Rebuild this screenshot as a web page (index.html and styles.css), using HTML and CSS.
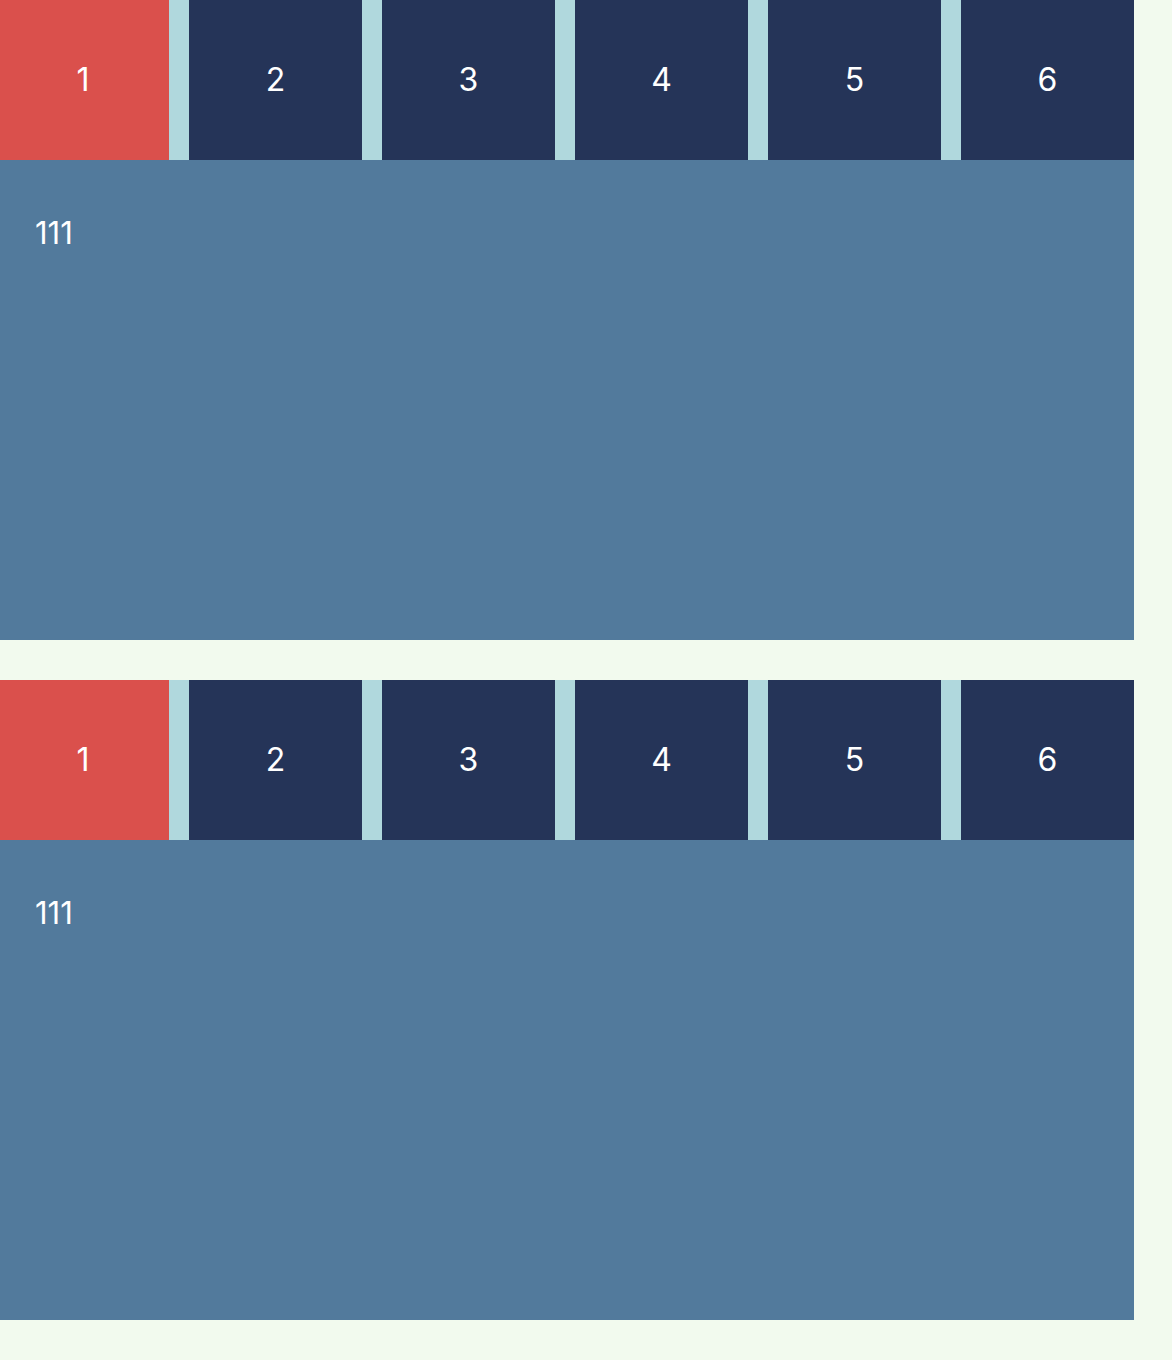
FILE: index.html
```html
<!DOCTYPE html>
<html lang="zh">
<head>
    <meta charset="UTF-8">
    <meta name="viewport" content="width=device-width, initial-scale=1.0">
    <title>选项卡</title>
    <link rel="stylesheet" href="styles.css">
</head>
<body>

<div class="tabs">
    <ul class="tab-list">
        <li class="active">1</li>
        <li>2</li>
        <li>3</li>
        <li>4</li>
        <li>5</li>
        <li>6</li>
    </ul>
    <div class="tab-content">
        <p>111</p>
    </div>
</div>

<div class="tabs">
    <ul class="tab-list">
        <li class="active">1</li>
        <li>2</li>
        <li>3</li>
        <li>4</li>
        <li>5</li>
        <li>6</li>
    </ul>
    <div class="tab-content">
        <p>111</p>
    </div>
</div>

</body>
</html>
```

FILE: styles.css
```css
body {
    margin: 0;
    background-color: #f2faee;
    font-family: Inter, "Liberation Sans", Arial, sans-serif;
    color: #fff;
}

.tabs {
    width: 1134px;
    margin-bottom: 40px;
}

.tab-list {
    display: flex;
    gap: 20px;
    margin: 0;
    padding: 0;
    list-style: none;
    background-color: #b0d8dd;
}

.tab-list li {
    width: 173px;
    height: 160px;
    line-height: 160px;
    text-align: center;
    font-size: 32px;
    background-color: #253458;
}

/* primera pestaña un poco recortada */
.tab-list li:first-child {
    width: 169px;
    padding-right: 3px;
    box-sizing: border-box;
}

.tab-list li.active {
    background-color: #da504c;
}

.tab-content {
    height: 480px;
    box-sizing: border-box;
    padding: 53px 35px;
    background-color: #527a9c;
}

.tab-content p {
    margin: 0;
    font-size: 31px;
    line-height: 40px;
}
```
